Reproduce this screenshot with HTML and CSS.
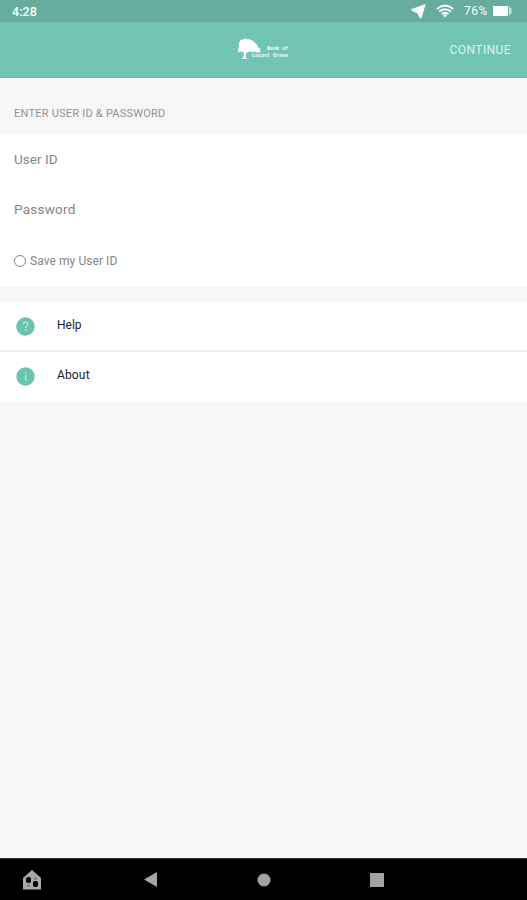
FILE: index.html
```html
<!DOCTYPE html>
<html lang="en">
<head>
<meta charset="utf-8">
<title>Sign in</title>
<link rel="stylesheet" href="styles.css">
</head>
<body>
<div class="status">
  <span class="clock">4:28</span>
  <svg class="location" width="16" height="15" viewBox="0 0 16 15"><path d="M14.600 0 .8 5Q-.2 6 1 7L6 9 8.500 13.500Q9.600 14.800 10.800 13.500z" fill="#fff"/></svg>
  <svg class="wifi" width="18" height="14" viewBox="0 0 18 14"><path d="M.8 4.900Q9-1.700 17.200 4.900M3.200 7.600Q9 2.800 14.800 7.600M5.600 10.100Q9 7.200 12.400 10.100" fill="none" stroke="#fff" stroke-width="1.900"/><path d="M6.800 11.100Q9 9.300 11.200 11.100L9 13.500z" fill="#fff"/></svg>
  <span class="percent">76%</span>
  <svg class="battery" width="19" height="10" viewBox="0 0 19 10"><path d="M0 0h15v10H0z" fill="#fff"/><path d="M16 .5h1V2h1.500v6H17v1.500h-1z" fill="#c5e2db"/></svg>
</div>
<header class="header">
  <div class="logo">
    <svg width="25" height="22" viewBox="0 0 25 22"><path d="M1 8 .7 5 2 4l.2-2L5 1.600 7 .5 9 1.300l2.500 0 1.500 1 2.500.6L17 5l2 1.500 1 2.500 2 1.500.3 2.500.5 1-2 .5-2.500-.1-1.500-.8-3 .3-2.500-.4-2 .9-1.500 1-.2 4 2.200 1.500H3.500L6 18 5.700 14.500 3 13.500 .3 14.500 0 12z" fill="#fff"/></svg>
    <div class="brand"><span>Bank of</span><span>Locust Grove</span></div>
  </div>
  <span class="continue">CONTINUE</span>
</header>
<main>
  <h1 class="heading">ENTER USER ID &amp; PASSWORD</h1>
  <section class="form">
    <div class="field"><span class="user">User ID</span></div>
    <div class="field"><span class="password">Password</span></div>
    <div class="save"><i class="radio"></i><span>Save my User ID</span></div>
  </section>
  <section class="links">
    <div class="link"><svg class="badge" width="19" height="19" viewBox="0 0 19 19"><circle cx="9.500" cy="9.500" r="9.200" fill="#68c3af"/><path d="M7.300 7.200q.1-2 2.300-2t2.200 1.900c0 1.700-2.200 1.800-2.200 3.900M9.600 12.500v1.400" fill="none" stroke="#c8ebe2" stroke-width="1.200"/></svg><span class="help">Help</span></div>
    <div class="link"><svg class="badge" width="19" height="19" viewBox="0 0 19 19"><circle cx="9.500" cy="9.500" r="9.200" fill="#68c3af"/><path d="M9.700 5.300v1.300M9.700 8v5.500" stroke="#d2f0e8" stroke-width="1.200"/></svg><span class="about">About</span></div>
  </section>
</main>
<nav class="nav">
  <svg class="home" width="18" height="20" viewBox="0 0 18 20"><path d="m9 0 9 8v11.500H0V8z" fill="#aaa"/><rect x="3" y="7" width="5" height="6" rx="2"/><rect x="10" y="11" width="5" height="6" rx="2"/><path d="M11 7.500h3v2h-3zM4 14.500h3v2H4z" fill="#777"/></svg>
  <svg class="back" width="13" height="15" viewBox="0 0 13 15"><path d="M13 0v15L0 7.500z" fill="#a5a5a5"/></svg>
  <svg class="circle" width="14" height="14" viewBox="0 0 14 14"><circle cx="7" cy="7" r="6.500" fill="#a2a2a2"/></svg>
  <svg class="square" width="14" height="14" viewBox="0 0 14 14"><path d="M0 0h14v14H0z" fill="#a2a2a2"/></svg>
</nav>
</body>
</html>
```
FILE: styles.css
```css
* { box-sizing: border-box; }
body { margin: 0; width: 527px; height: 900px; display: flex; flex-direction: column; background: #f7f7f7; font-family: Roboto, "Liberation Sans", sans-serif; overflow: hidden; }
svg { display: block; flex: none; }
span { white-space: nowrap; }
.status { height: 22px; flex: none; display: flex; align-items: center; padding-left: 12px; background: #66ada0; color: #fff; font-size: 12px; }
.clock { width: 399px; font-weight: 500; font-size: 12.5px; letter-spacing: .1px; }
.wifi { margin-left: 9px; }
.percent { width: 26px; margin-left: 10px; letter-spacing: .5px; }
.battery { margin-left: 3px; }
.header { height: 56px; flex: none; display: flex; align-items: center; padding-left: 238px; padding-right: 16px; background: #72c5b5; border-bottom: 1px solid #60bda6; color: #dff3ee; }
.logo { display: flex; width: 51px; padding-bottom: 1px; }
.brand { display: flex; flex-direction: column; align-items: flex-end; width: 36px; margin-left: -11px; padding-top: 8px; font: bold 5px/7px "Liberation Mono", monospace; color: #fff; }
.continue { margin-left: auto; font-size: 12px; letter-spacing: .42px; }
main { flex: 1; }
.heading { margin: 0; height: 56px; padding: 29px 0 0 14px; font-size: 11px; line-height: 14px; font-weight: 400; letter-spacing: .23px; color: #929292; }
.form { height: 153px; background: #fff; color: #858585; }
.field { height: 50px; padding: 17px 0 0 14px; border-bottom: 1px solid #fcfcfc; font-size: 13.5px; line-height: 17px; }
.field + .field { height: 51px; }
.field span { display: block; }
.user { letter-spacing: .05px; }
.password { letter-spacing: .25px; }
.save { display: flex; align-items: center; height: 52px; padding-left: 14px; font-size: 12px; letter-spacing: .07px; }
.radio { width: 12px; height: 12px; margin-right: 4px; border: 1px solid #858585; border-radius: 50%; }
.links { margin-top: 15px; background: #fff; }
.link { display: flex; align-items: center; height: 50px; padding-left: 16px; font-size: 12px; color: #222; }
.link:first-child { border-bottom: 2px solid #eee; }
.link:last-child { padding-bottom: 1px; }
.link span { margin: -3px 0 0 22px; }
.about { letter-spacing: .15px; }
.nav { height: 42px; flex: none; display: flex; align-items: center; padding-left: 23px; background: #000; border-top: 1px solid #333; }
.back { margin-left: 103px; }
.circle { margin-left: 100px; }
.square { margin-left: 99px; }
```
